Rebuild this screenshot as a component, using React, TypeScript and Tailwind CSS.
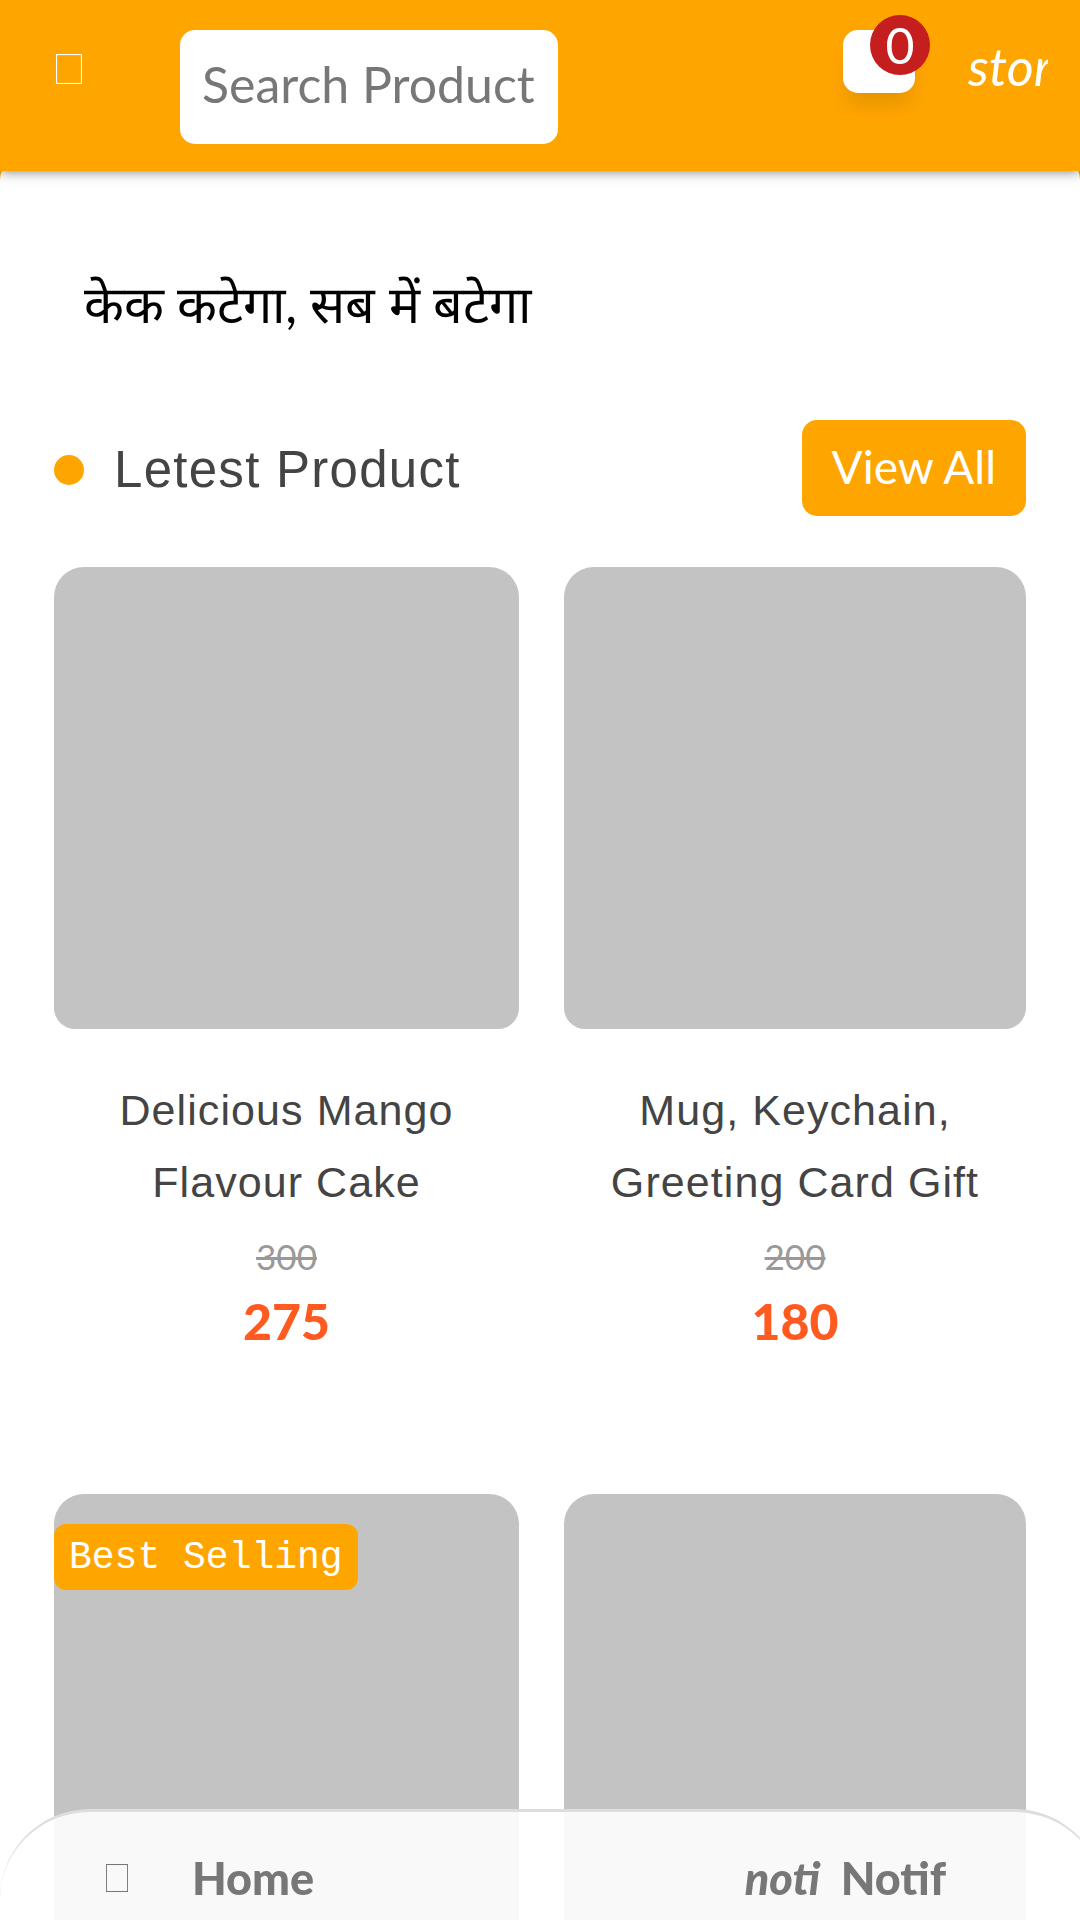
import { useState } from 'react'

const products = [
  { name: 'Delicious Mango Flavour Cake', oldPrice: 300, price: 275, tag: null },
  { name: 'Mug, Keychain, Greeting Card Gift', oldPrice: 200, price: 180, tag: null },
  { name: 'Chocolate Truffle Cake', oldPrice: 450, price: 400, tag: 'Best Selling' },
  { name: 'Red Velvet Heart Cake', oldPrice: 550, price: 499, tag: null },
]

// Empty box glyph, drawn in the current text colour
function GlyphBox({ className }: { className?: string }) {
  return (
    <svg className={className} viewBox="0 0 26 30" preserveAspectRatio="none" fill="none" aria-hidden="true">
      <rect x="0.5" y="0.5" width="25" height="29" stroke="currentColor" strokeWidth="1.2" />
    </svg>
  )
}

function Header({ cartCount }: { cartCount: number }) {
  const [query, setQuery] = useState('')

  return (
    <header className="fixed inset-x-0 top-0 z-20 flex h-[171px] items-start bg-[#ffa500] px-8 pt-[30px] text-white shadow-[0_0_12px_rgba(0,0,0,0.55)]">
      <button aria-label="Menu" className="ml-6 mt-6 w-[124px] shrink-0">
        <GlyphBox className="h-[30px] w-[26px]" />
      </button>
      <input
        type="text"
        aria-label="Search Product"
        placeholder="Search Product"
        value={query}
        onChange={(e) => setQuery(e.target.value)}
        className="h-[114px] w-[378px] min-w-0 rounded-[15px] bg-white px-[22px] pb-[6px] text-[50px] text-black outline-none placeholder:text-[#777]"
      />
      <button
        aria-label="Cart"
        className="relative ml-auto h-[63px] w-[72px] shrink-0 rounded-[15px] bg-white shadow-[0_16px_20px_-4px_rgba(0,0,0,0.1)]"
      >
        <span className="absolute -right-[15px] -top-[15px] flex size-[60px] items-center justify-center rounded-full bg-[#c41e1e] text-[50px]">
          {cartCount}
        </span>
      </button>
      <a href="#store" className="ml-[53px] mt-1 w-20 shrink-0 overflow-hidden whitespace-nowrap text-[52px] italic leading-[64px]">
        stor
      </a>
    </header>
  )
}

function ProductCard({ name, oldPrice, price, tag }: (typeof products)[number]) {
  return (
    <article className="text-center">
      <div className="relative h-[462px] rounded-t-[30px] rounded-b-[21px] bg-[#c3c3c3]">
        {tag && (
          <span className="absolute left-0 top-[30px] h-[66px] whitespace-nowrap rounded-[12px] bg-[#ffa500] px-[15px] font-['Liberation_Mono'] text-[38px] leading-[68px] text-white">
            {tag}
          </span>
        )}
      </div>
      <h3 className="mt-[45px] px-8 font-['Liberation_Sans'] text-[43px] leading-[72px] tracking-wide text-[#444]">{name}</h3>
      <p className="text-[35px] leading-[76px] text-[#999] line-through">{oldPrice}</p>
      <p className="text-[50px] font-black leading-[54px] text-[#ff5a1f]">{price}</p>
    </article>
  )
}

function BottomNav() {
  return (
    <nav
      aria-label="Bottom navigation"
      className="fixed -right-6 bottom-0 left-0 z-20 flex h-[111px] items-center rounded-t-[90px] border-t-[3px] border-[#ddd] bg-white/90 pl-[106px] pt-6 text-[45px] font-black leading-[64px] text-[#777]"
    >
      <a href="#home" className="flex w-[64%] items-center">
        <GlyphBox className="mr-[64px] h-[28px] w-[22px]" />
        Home
      </a>
      <a href="#notifications" className="flex items-center">
        <span className="w-20 overflow-hidden italic">noti</span>
        <span className="ml-4">Notif</span>
      </a>
    </nav>
  )
}

export default function App() {
  return (
    <div className="h-screen overflow-hidden bg-[#ffa500] pt-[156px] font-['Lato',sans-serif]">
      <Header cartCount={0} />
      <main className="min-h-screen rounded-t-[24px] bg-white px-[54px] pt-[102px]">
        <p className="ml-[30px] text-[52px] leading-[90px] text-black">केक कटेगा, सब में बटेगा</p>

        <div className="mt-[72px] flex items-center justify-between">
          <h2 className="flex items-center gap-[30px] pt-1 font-['Liberation_Sans'] text-[51px] leading-[72px] tracking-wide text-[#444]">
            <span className="size-[30px] rounded-full bg-[#ffa500]" />
            Letest Product
          </h2>
          <button className="h-24 rounded-[15px] bg-[#ffa500] px-[30px] pb-1 text-[46px] text-white">View All</button>
        </div>

        <div className="mt-[51px] grid grid-cols-[465fr_462fr] gap-x-[45px] gap-y-[146px]">
          {products.map((p) => (
            <ProductCard key={p.name} {...p} />
          ))}
        </div>
      </main>
      <BottomNav />
    </div>
  )
}
